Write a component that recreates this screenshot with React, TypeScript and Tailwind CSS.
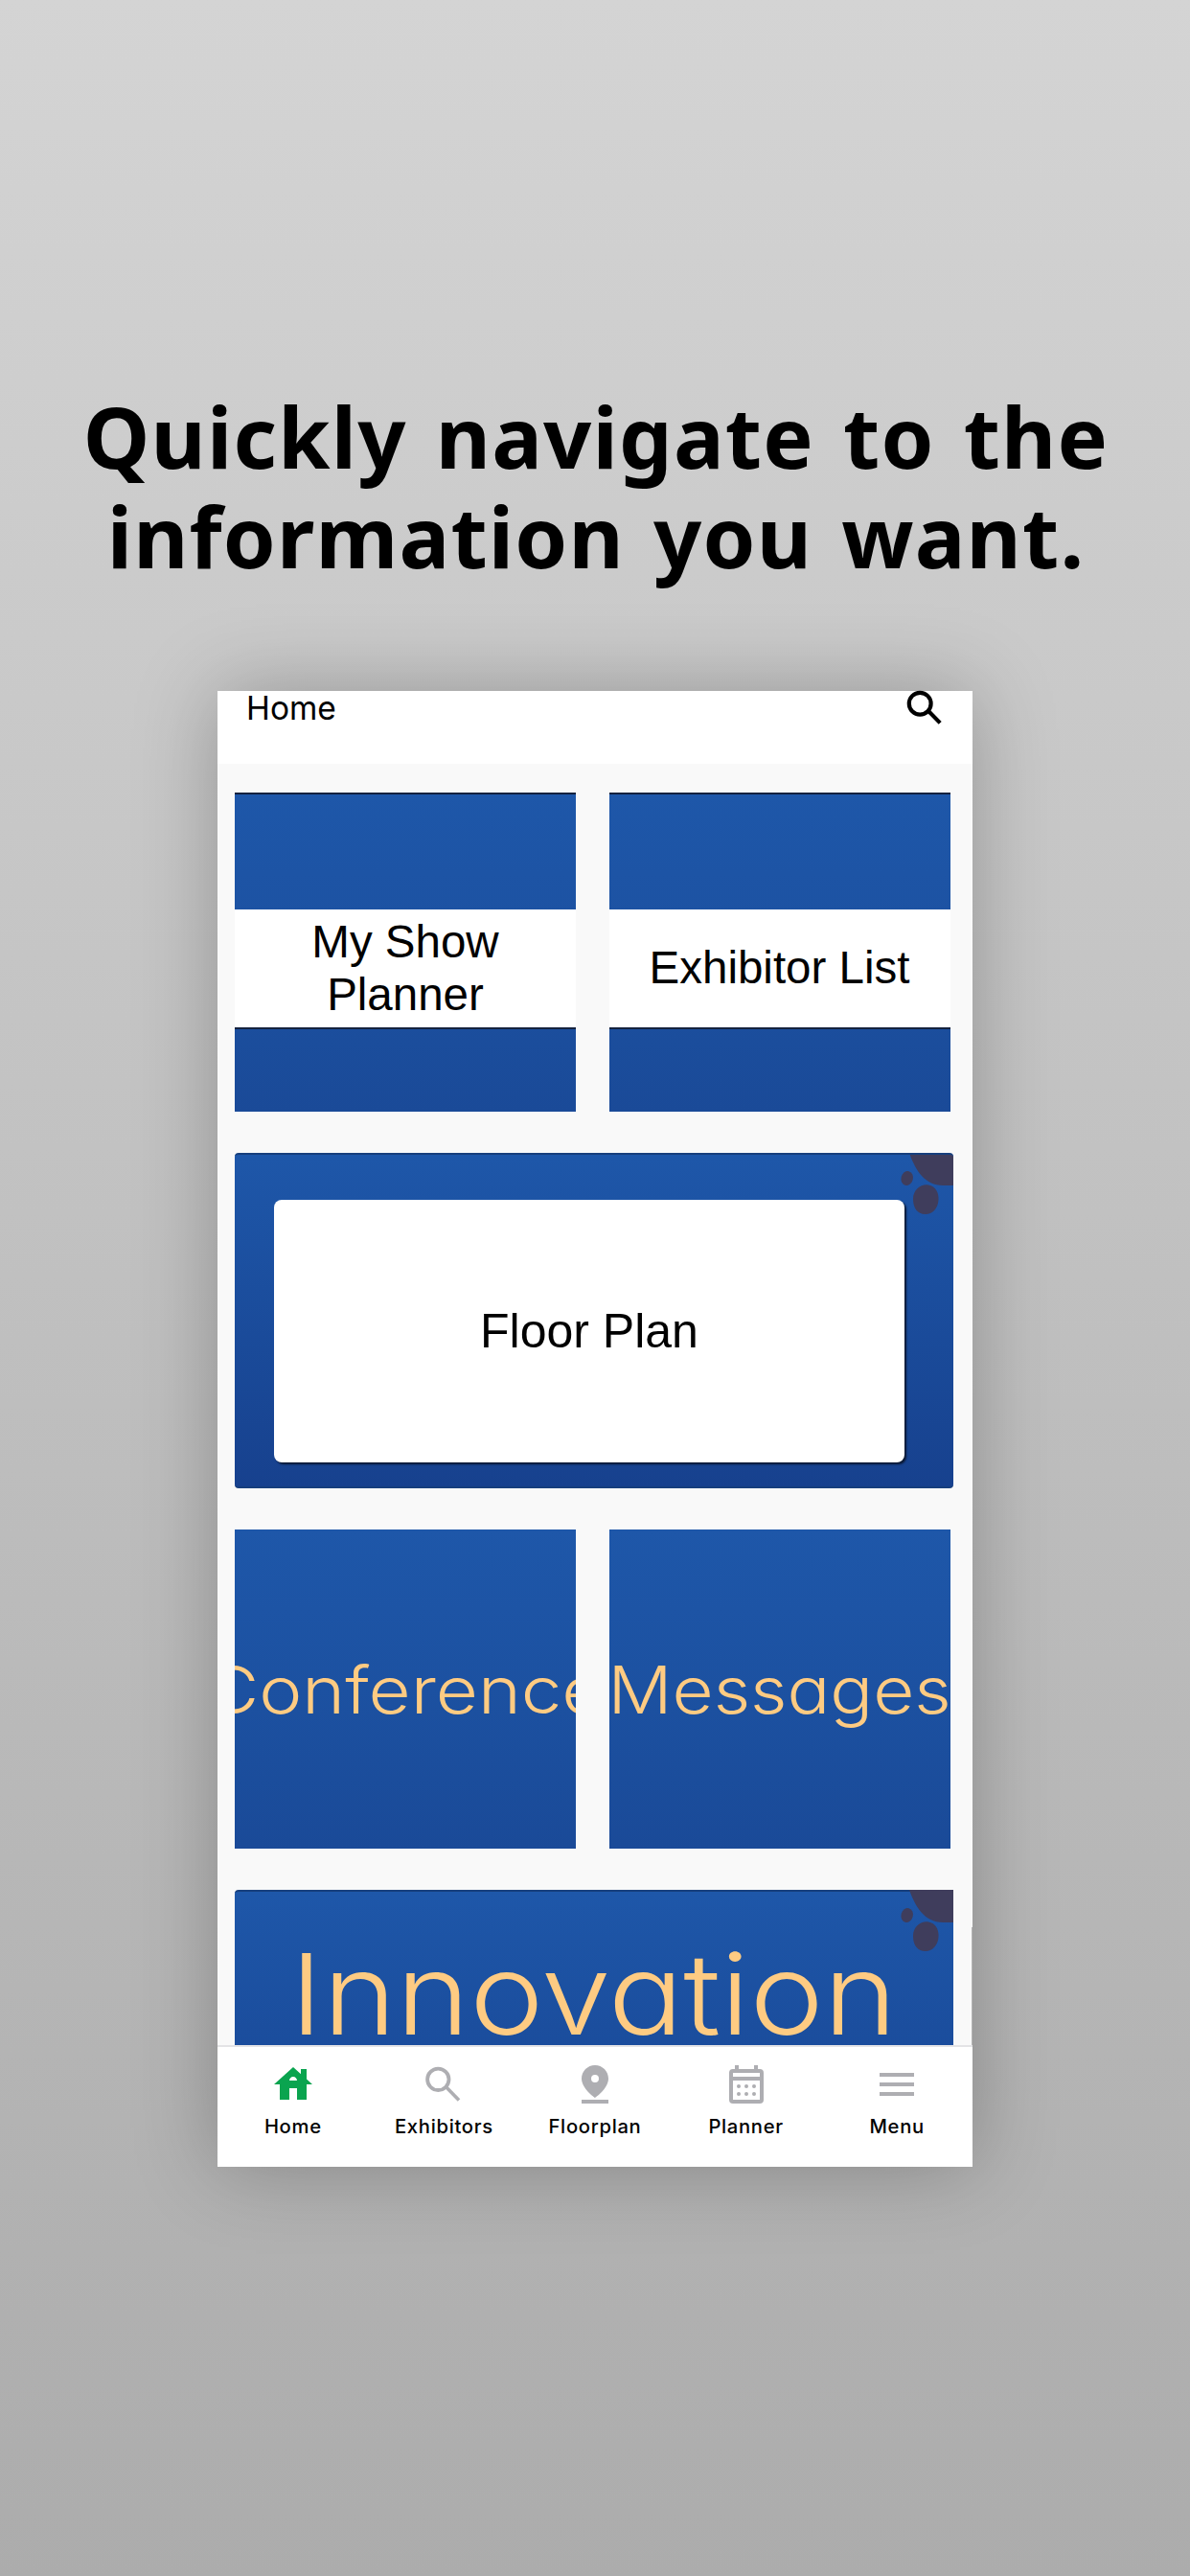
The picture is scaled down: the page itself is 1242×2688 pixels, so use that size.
import React from "react";

const pair = "flex gap-[34.500px]";
const tileGradient = "bg-linear-to-b from-[#1e57a9] via-[#1c51a1] to-[#1a4a98]";
const geometric = "font-[Inter,sans-serif] font-[340] text-[#fecb82] [font-feature-settings:'cv11']";

function LabelTile({ children }: { children: React.ReactNode }) {
  return (
    <div className={`flex h-[333px] w-[356px] flex-col ${tileGradient}`}>
      <div className="h-[121.500px] border-t-2 border-[#14223f]" />
      <div className="flex h-[125px] items-center justify-center border-b-2 border-[#14223f] bg-white pt-px text-center font-['Liberation_Sans',sans-serif] text-[47.500px] leading-[54.700px] text-black">
        {children}
      </div>
    </div>
  );
}

function Blobs() {
  return (
    <svg className="absolute -top-0.5 right-0" width="60" height="70" viewBox="0 0 60 70" fill="#3f3d5c">
      <path d="M14 0C20 17 30 35 51 34H60V0Z" />
      <ellipse cx="11.7" cy="26.5" rx="6.2" ry="7.5" transform="rotate(15 11.7 26.5)" />
      <path d="M18 48C18 38 27 32 34 33.500C42 35 45 42 44.500 49C44 58 38 64 31 64C22 64 18 57 18 48Z" />
    </svg>
  );
}

function NavItem({ label, children }: { label: string; children: React.ReactNode }) {
  return (
    <div className="flex w-[157.600px] flex-col items-center">
      <svg width="48" height="48" viewBox="0 0 24 24" fill="#aeaeb2">
        {children}
      </svg>
      <span className="mt-[8px] font-[Inter,sans-serif] text-[20.200px] font-[480] leading-[24px] tracking-[0.700px] text-black">{label}</span>
    </div>
  );
}

export default function App() {
  return (
    <div className="flex h-[2688px] w-[1242px] flex-col items-center overflow-hidden bg-linear-to-b from-[#d4d4d4] to-[#acacac]">
      <h1 className="mt-[404px] whitespace-nowrap pl-[2px] text-center font-['Noto_Sans',sans-serif] text-[88px] font-bold leading-[103.500px] tracking-[1.200px] text-black [word-spacing:6px]">
        Quickly navigate to the
        <br />
        information you want.
      </h1>
      <main className="relative mt-[110px] flex h-[1540px] w-[788px] flex-col bg-[#f9f9f9] shadow-[0_0_80px_rgba(0,0,0,0.26)]">
        <header className="flex h-[76px] items-start justify-between bg-white pl-[30px] pr-[26px]">
          <span className="font-[Inter,sans-serif] text-[33.500px] leading-[36px]">Home</span>
          <svg className="-mt-[6px]" width="48" height="48" viewBox="0 0 24 24" fill="none" stroke="#000">
            <circle cx="9.600" cy="9.600" r="5.700" strokeWidth="2.100" />
            <path d="M14 14l.8.3 5.300 5.400" strokeWidth="2.100" />
          </svg>
        </header>
        <section className="flex h-[1337px] flex-col overflow-hidden pl-[18px] pt-[30px]">
          <div className={pair}>
            <LabelTile>My Show<br />Planner</LabelTile>
            <LabelTile>Exhibitor List</LabelTile>
          </div>
          <div className="relative mt-[43px] h-[350px] w-[750px] shrink-0 overflow-hidden rounded-[4px] border-y-2 border-[#173f7d] bg-linear-to-b from-[#1e57a9] to-[#17418e] pl-[41px] pt-[47px]">
            <Blobs />
            <div className="flex h-[274px] w-[658px] items-center justify-center rounded-[8px] bg-white pt-px font-['Liberation_Sans',sans-serif] text-[50px] text-black shadow-[2px_2px_2px_#0b1833]">
              Floor Plan
            </div>
          </div>
          <div className={`${pair} mt-[43px] text-[68px] ${geometric}`}>
            <div className={`flex h-[333px] w-[356px] items-center justify-center overflow-hidden ${tileGradient}`}>
              <span className="scale-x-[1.12]">Conference</span>
            </div>
            <div className={`flex h-[333px] w-[356px] items-center justify-center overflow-hidden ${tileGradient}`}>
              <span className="scale-x-[1.095]">Messages</span>
            </div>
          </div>
          <div className="relative mt-[43px] flex h-[350px] w-[750px] shrink-0 justify-center rounded-[4px] border-t-2 border-[#173f7d] bg-linear-to-b from-[#1e57a9] to-[#17418e]">
            <Blobs />
            <span className={`mt-[36px] scale-x-[1.113] text-[117px] leading-[142px] ${geometric}`}>Innovation</span>
          </div>
        </section>
        <div className="absolute right-0 top-[1290px] h-[123px] w-px bg-[#b4b4b4]" />
        <nav className="flex h-[127px] border-t-2 border-[#e4e4e6] bg-white pt-[15px]">
          <NavItem label="Home">
            <path fill="#0aa44f" fillRule="evenodd" d="M19 9.300V4h-3v2.600L12 3 2 12h3v8h5v-6h4v6h5v-8h3zM10 10c0-1.100.9-2 2-2s2 .9 2 2z" />
          </NavItem>
          <NavItem label="Exhibitors">
            <g fill="none" stroke="#aeaeb2">
              <circle cx="9.150" cy="9.400" r="5.600" strokeWidth="1.900" />
              <path d="M13.300 13.400L20 20.200" strokeWidth="1.800" />
            </g>
          </NavItem>
          <NavItem label="Floorplan">
            <path d="M19 9c0-3.870-3.130-7-7-7S5 5.130 5 9c0 5.250 7 10 7 10s7-4.750 7-10zm-9 0a2 2 0 1 1 4 0 2 2 0 0 1-4 0zM5 20v2h14v-2z" />
          </NavItem>
          <NavItem label="Planner">
            <path fillRule="evenodd" d="M5 4h1V2h2v2h8V2h2v2h1a2 2 0 0 1 2 2v14a2 2 0 0 1-2 2H5a2 2 0 0 1-2-2V6a2 2 0 0 1 2-2zm0 2v2h14V6zm0 4v10h14V10z" />
            <circle cx="8" cy="13" r="1" />
            <circle cx="12" cy="13" r="1" />
            <circle cx="16" cy="13" r="1" />
            <circle cx="8" cy="17" r="1" />
            <circle cx="12" cy="17" r="1" />
            <circle cx="16" cy="17" r="1" />
          </NavItem>
          <NavItem label="Menu">
            <path d="M3 6h18v2H3zM3 11h18v2H3zM3 16h18v2H3z" />
          </NavItem>
        </nav>
      </main>
    </div>
  );
}
